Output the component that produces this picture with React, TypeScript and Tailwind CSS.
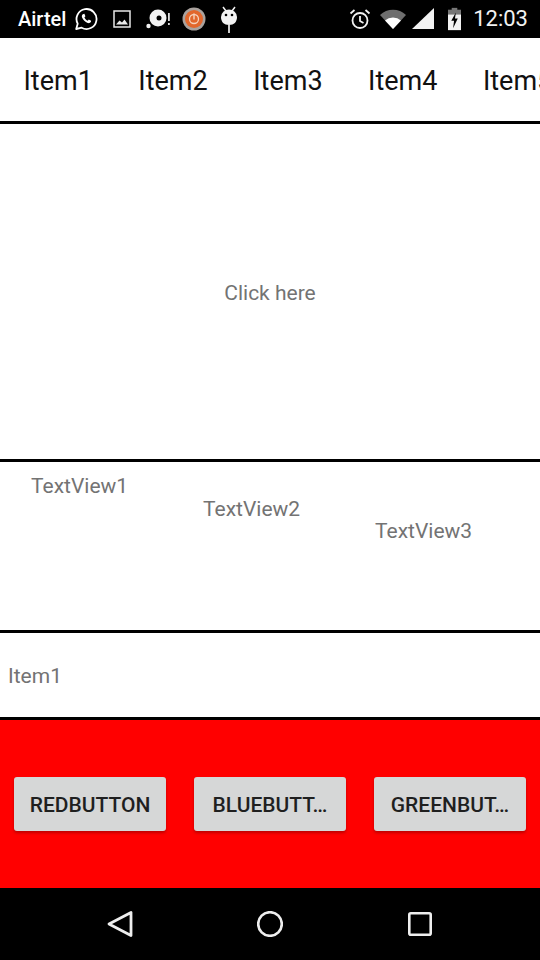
const tabs = ["Item1", "Item2", "Item3", "Item4", "Item5"];
const buttons = ["REDBUTTON", "BLUEBUTT…", "GREENBUT…"];

function StatusBar() {
  return (
    <div className="flex h-[38px] items-center bg-black text-white">
      <span className="ml-[18px] text-[20px] font-medium leading-none">Airtel</span>
      {/* whatsapp */}
      <svg className="ml-[8px]" width="24" height="24" viewBox="0 0 24 24" fill="none">
        <path d="M2.2 22l1.500-5.300A10 10 0 1 1 7.600 20.700z" stroke="#fff" strokeWidth="1.800" strokeLinejoin="round" />
        <path d="M8.800 7.200c-1 .8-1.200 2-.7 3.400 1 2.500 3 4.600 5.600 5.500 1.400.4 2.500 0 3.200-1l.2-1.400-2.300-1.200-1.100 1.200c-1.400-.6-2.600-1.800-3.300-3.200l1-1.200-1-2.500z" fill="#fff" />
      </svg>
      {/* gallery */}
      <svg className="ml-[15px]" width="18" height="18" viewBox="0 0 18 18" fill="none">
        <rect x="1" y="1" width="16" height="16" stroke="#e8e8e8" strokeWidth="1.500" />
        <path d="M3 14.500l3.500-4 2.500 2 2.500-3 3.500 5z" fill="#e8e8e8" />
      </svg>
      {/* disc */}
      <svg className="ml-[14px]" width="26" height="22" viewBox="0 0 26 22">
        <circle cx="13" cy="10" r="8.500" fill="#f2f2f2" />
        <circle cx="14" cy="10" r="2.500" fill="#000" />
        <circle cx="3.500" cy="18" r="2.200" fill="#f2f2f2" />
        <rect x="23" y="5" width="1.800" height="8" fill="#ddd" />
        <rect x="23" y="15" width="1.800" height="2" fill="#ddd" />
      </svg>
      {/* power app */}
      <svg className="ml-[11px]" width="24" height="24" viewBox="0 0 24 24">
        <circle cx="12" cy="12" r="11.500" fill="#a9a29e" />
        <circle cx="12" cy="12" r="9" fill="#e2672c" />
        <circle cx="12" cy="12" r="4.500" fill="none" stroke="#f6d3bd" strokeWidth="1.300" />
        <rect x="11.300" y="6.500" width="1.400" height="6" fill="#f6d3bd" />
      </svg>
      {/* android debug */}
      <svg className="ml-[14px]" width="18" height="30" viewBox="1 0 18 30">
        <path d="M4 3l3 4M16 3l-3 4" stroke="#f2f2f2" strokeWidth="1.500" />
        <path d="M2 13a8 7.500 0 0 1 16 0c0 5-3 8-8 8s-8-3-8-8z" fill="#f2f2f2" />
        <circle cx="7" cy="11" r="1.300" fill="#000" />
        <circle cx="13" cy="11" r="1.300" fill="#000" />
        <rect x="9" y="21" width="2" height="8" fill="#ccc" />
      </svg>

      <div className="ml-auto flex items-center">
        {/* alarm */}
        <svg width="22" height="22" viewBox="0 0 22 22" fill="none" stroke="#f2f2f2" strokeWidth="1.800">
          <circle cx="11" cy="12.500" r="7.500" />
          <path d="M11 8v5l3.500 2M1.500 5.500L5.500 2M20.500 5.500L16.500 2" />
        </svg>
        {/* wifi */}
        <svg className="ml-[9px]" width="26" height="20" viewBox="0 0 26 20">
          <path d="M0 6a19 19 0 0 1 26 0L13 20z" fill="#6e6e6e" />
          <path d="M5 11.500a12 12 0 0 1 16 0L13 20z" fill="#fff" />
        </svg>
        {/* signal */}
        <svg className="ml-[6px]" width="22" height="22" viewBox="0 0 22 22">
          <path d="M0 21L22 0v21z" fill="#f2f2f2" />
        </svg>
        {/* battery charging */}
        <svg className="ml-[14px]" width="13" height="24" viewBox="0 0 14 24">
          <rect x="4" y="0" width="6" height="3" fill="#777" />
          <rect x="0" y="2" width="14" height="5" fill="#777" />
          <rect x="0" y="7" width="14" height="17" fill="#f2f2f2" />
          <path d="M8.500 5L3.500 14h3l-1 8 5-10.500h-3z" fill="#000" />
        </svg>
        <span className="ml-[12px] mr-[12px] text-[22px] leading-none text-[#f2f2f2]">12:03</span>
      </div>
    </div>
  );
}

function Line() {
  return <div className="h-[3px] bg-black" />;
}

function NavBar() {
  return (
    <div className="flex h-[72px] items-center bg-black pl-[107px]">
      <svg width="26" height="28" viewBox="0 0 26 28" fill="none">
        <path d="M24 2.500v23L2 14z" stroke="#eee" strokeWidth="2.800" strokeLinejoin="round" />
      </svg>
      <svg className="ml-[124px]" width="26" height="26" viewBox="0 0 26 26" fill="none">
        <circle cx="13" cy="13" r="11.800" stroke="#eee" strokeWidth="2.600" />
      </svg>
      <svg className="ml-[125px]" width="24" height="24" viewBox="0 0 24 24" fill="none">
        <rect x="1.300" y="1.300" width="21.400" height="21.400" rx="1.500" stroke="#eee" strokeWidth="2.600" />
      </svg>
    </div>
  );
}

export default function App() {
  return (
    <div className="flex h-[960px] w-[540px] flex-col overflow-hidden bg-white font-['Roboto',sans-serif]">
      <StatusBar />

      <div className="flex h-[83px] items-center gap-[45.500px] overflow-hidden whitespace-nowrap pl-[23.500px] pt-[4px] text-[27px] leading-none text-[#111]">
        {tabs.map((t) => (
          <span key={t}>{t}</span>
        ))}
      </div>
      <Line />

      <div className="flex h-[335px] items-center justify-center pt-[4px] text-[21px] text-[#737373]">Click here</div>
      <Line />

      <div className="flex h-[168px] items-start pl-[31px] text-[21px] leading-[25px] text-[#737373]">
        <span className="mt-[12px] w-[172px]">TextView1</span>
        <span className="mt-[35px] w-[172px]">TextView2</span>
        <span className="mt-[57px] w-[96px]">TextView3</span>
      </div>
      <Line />

      <div className="flex h-[84px] items-center pl-[8px] pt-[4px] text-[21px] text-[#737373]">Item1</div>
      <Line />

      <div className="flex h-[168px] items-center justify-between bg-[#ff0000] px-[14px]">
        {buttons.map((b) => (
          <button key={b} className="h-[54px] w-[152px] rounded-[3px] bg-[#d6d7d7] pt-[4px] text-[21px] font-medium text-[#1f1f1f] shadow-[0_2px_3px_rgba(0,0,0,0.25)]">
            {b}
          </button>
        ))}
      </div>

      <NavBar />
    </div>
  );
}
